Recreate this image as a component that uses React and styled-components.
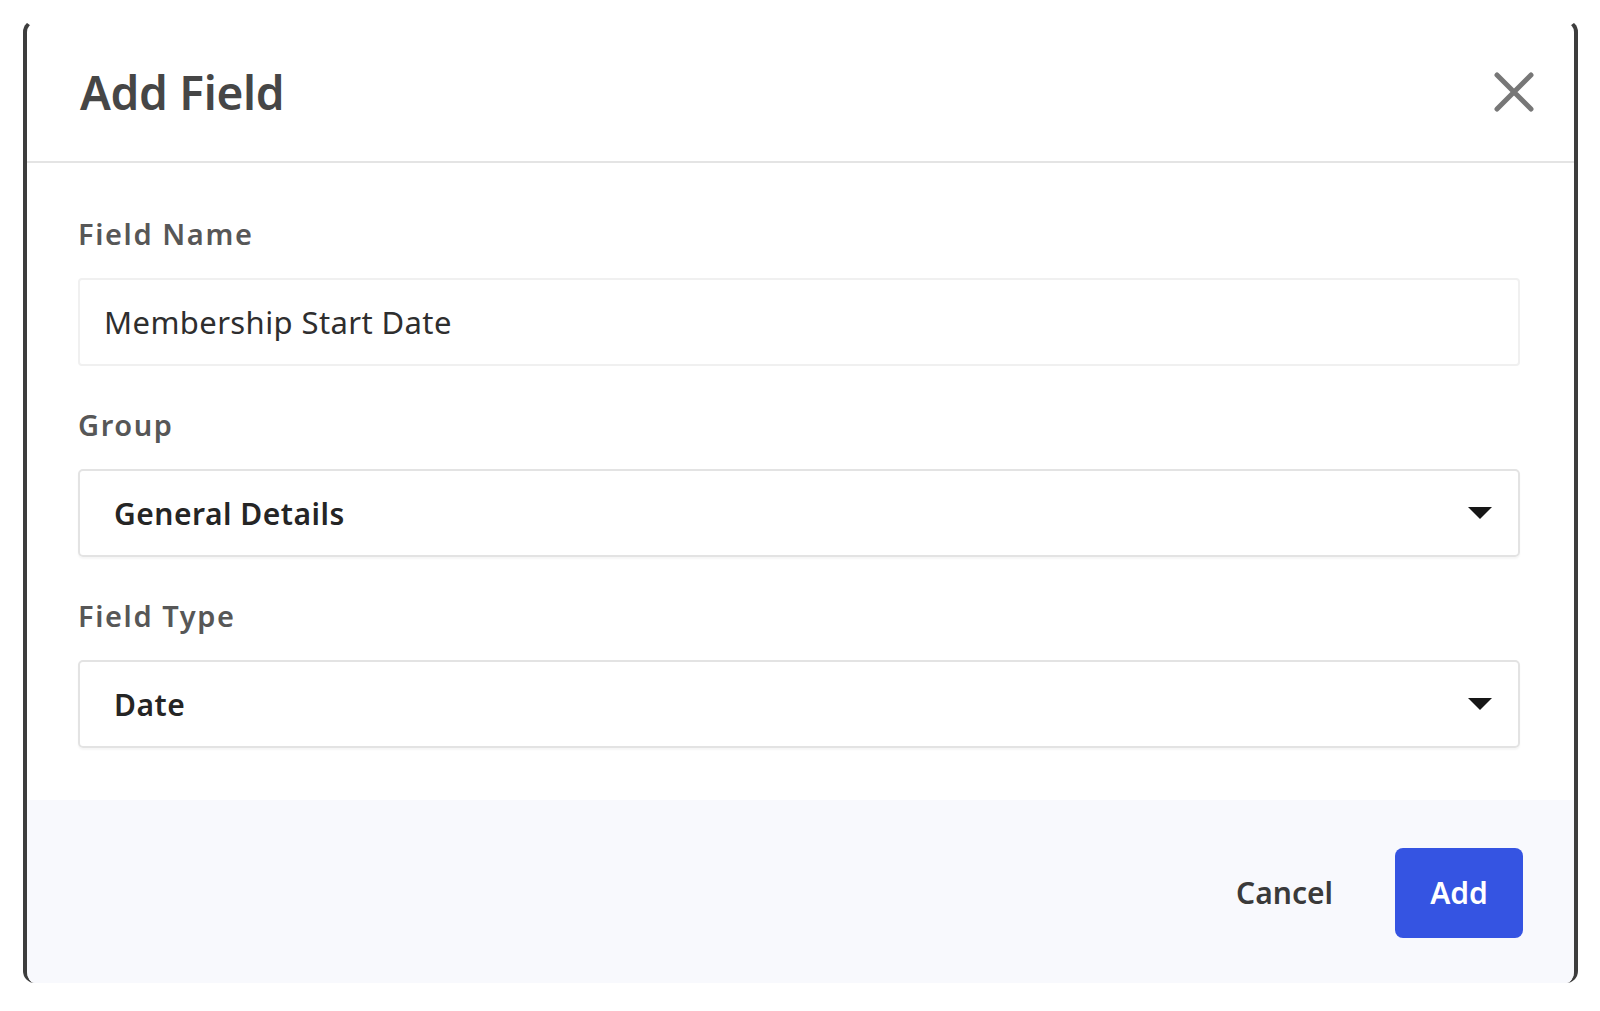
import React from 'react';
import styled, { createGlobalStyle } from 'styled-components';

const GlobalStyle = createGlobalStyle`
  html, body {
    margin: 0;
    padding: 0;
    background: #ffffff;
  }
  body {
    font-family: "Noto Sans", "Open Sans", sans-serif;
  }
  * {
    box-sizing: border-box;
  }
`;

const Page = styled.div`
  width: 1600px;
  height: 1011px;
  padding: 20px 22px 28px 23px;
  background: #ffffff;
`;

const Modal = styled.div`
  height: 963px;
  display: flex;
  flex-direction: column;
  background: #ffffff;
  border-style: solid;
  border-width: 3px 4px 0 4px;
  border-color: transparent #3d3d3d;
  border-radius: 12px;
  overflow: hidden;
`;

const Header = styled.div`
  height: 140px;
  display: flex;
  align-items: center;
  justify-content: space-between;
  padding: 0 38px 0 53px;
  border-bottom: 2px solid #e4e4e4;
`;

const Title = styled.h2`
  margin: 0;
  font-size: 46px;
  font-weight: 600;
  color: #464646;
  letter-spacing: -0.3px;
`;

const CloseButton = styled.button`
  width: 44px;
  height: 44px;
  padding: 0;
  border: none;
  background: none;
  cursor: pointer;
  display: flex;
  align-items: center;
  justify-content: center;
`;

const Body = styled.div`
  padding: 54px 54px 52px 51px;
  display: flex;
  flex-direction: column;
  gap: 42px;
`;

const Field = styled.div`
  display: flex;
  flex-direction: column;
  gap: 27px;
`;

const Label = styled.label`
  font-size: 29px;
  line-height: 34px;
  font-weight: 600;
  letter-spacing: 1.6px;
  color: #575757;
`;

const TextInput = styled.div`
  height: 88px;
  display: flex;
  align-items: center;
  padding: 0 24px;
  border: 2px solid #f0f0f0;
  border-radius: 4px;
  font-size: 31px;
  letter-spacing: 0.4px;
  color: #2e2e2e;
`;

const Select = styled.div`
  height: 88px;
  display: flex;
  align-items: center;
  justify-content: space-between;
  padding: 0 26px 0 34px;
  border: 2px solid #e3e3e3;
  border-radius: 5px;
  box-shadow: 0 2px 2px rgba(0, 0, 0, 0.04);
  font-size: 30px;
  font-weight: 600;
  letter-spacing: 0.5px;
  color: #252525;
`;

const Caret = styled.span`
  width: 0;
  height: 0;
  border-left: 12px solid transparent;
  border-right: 12px solid transparent;
  border-top: 12px solid #161616;
`;

const Footer = styled.div`
  flex: 1;
  display: flex;
  align-items: center;
  justify-content: flex-end;
  gap: 38px;
  padding: 2px 51px 0 0;
  background: #f8f9fd;
`;

const GhostButton = styled.button`
  height: 90px;
  padding: 0 24px;
  border: none;
  background: none;
  font-family: inherit;
  font-size: 30px;
  font-weight: 600;
  color: #3a3a3a;
  cursor: pointer;
`;

const PrimaryButton = styled.button`
  width: 128px;
  height: 90px;
  border: none;
  border-radius: 8px;
  background: #3554e2;
  font-family: inherit;
  font-size: 30px;
  font-weight: 600;
  color: #ffffff;
  cursor: pointer;
`;

const CloseIcon = () => (
  <svg width="42" height="42" viewBox="0 0 42 42">
    <path d="M4 4 L38 38 M38 4 L4 38" stroke="#777777" strokeWidth="5" strokeLinecap="round" />
  </svg>
);

const fields = [
  { label: 'Group', value: 'General Details' },
  { label: 'Field Type', value: 'Date' },
];

export default function App() {
  return (
    <>
      <GlobalStyle />
      <Page>
        <Modal>
          <Header>
            <Title>Add Field</Title>
            <CloseButton aria-label="Close">
              <CloseIcon />
            </CloseButton>
          </Header>
          <Body>
            <Field>
              <Label>Field Name</Label>
              <TextInput>Membership Start Date</TextInput>
            </Field>
            {fields.map(f => (
              <Field key={f.label}>
                <Label>{f.label}</Label>
                <Select>
                  <span>{f.value}</span>
                  <Caret />
                </Select>
              </Field>
            ))}
          </Body>
          <Footer>
            <GhostButton>Cancel</GhostButton>
            <PrimaryButton>Add</PrimaryButton>
          </Footer>
        </Modal>
      </Page>
    </>
  );
}
